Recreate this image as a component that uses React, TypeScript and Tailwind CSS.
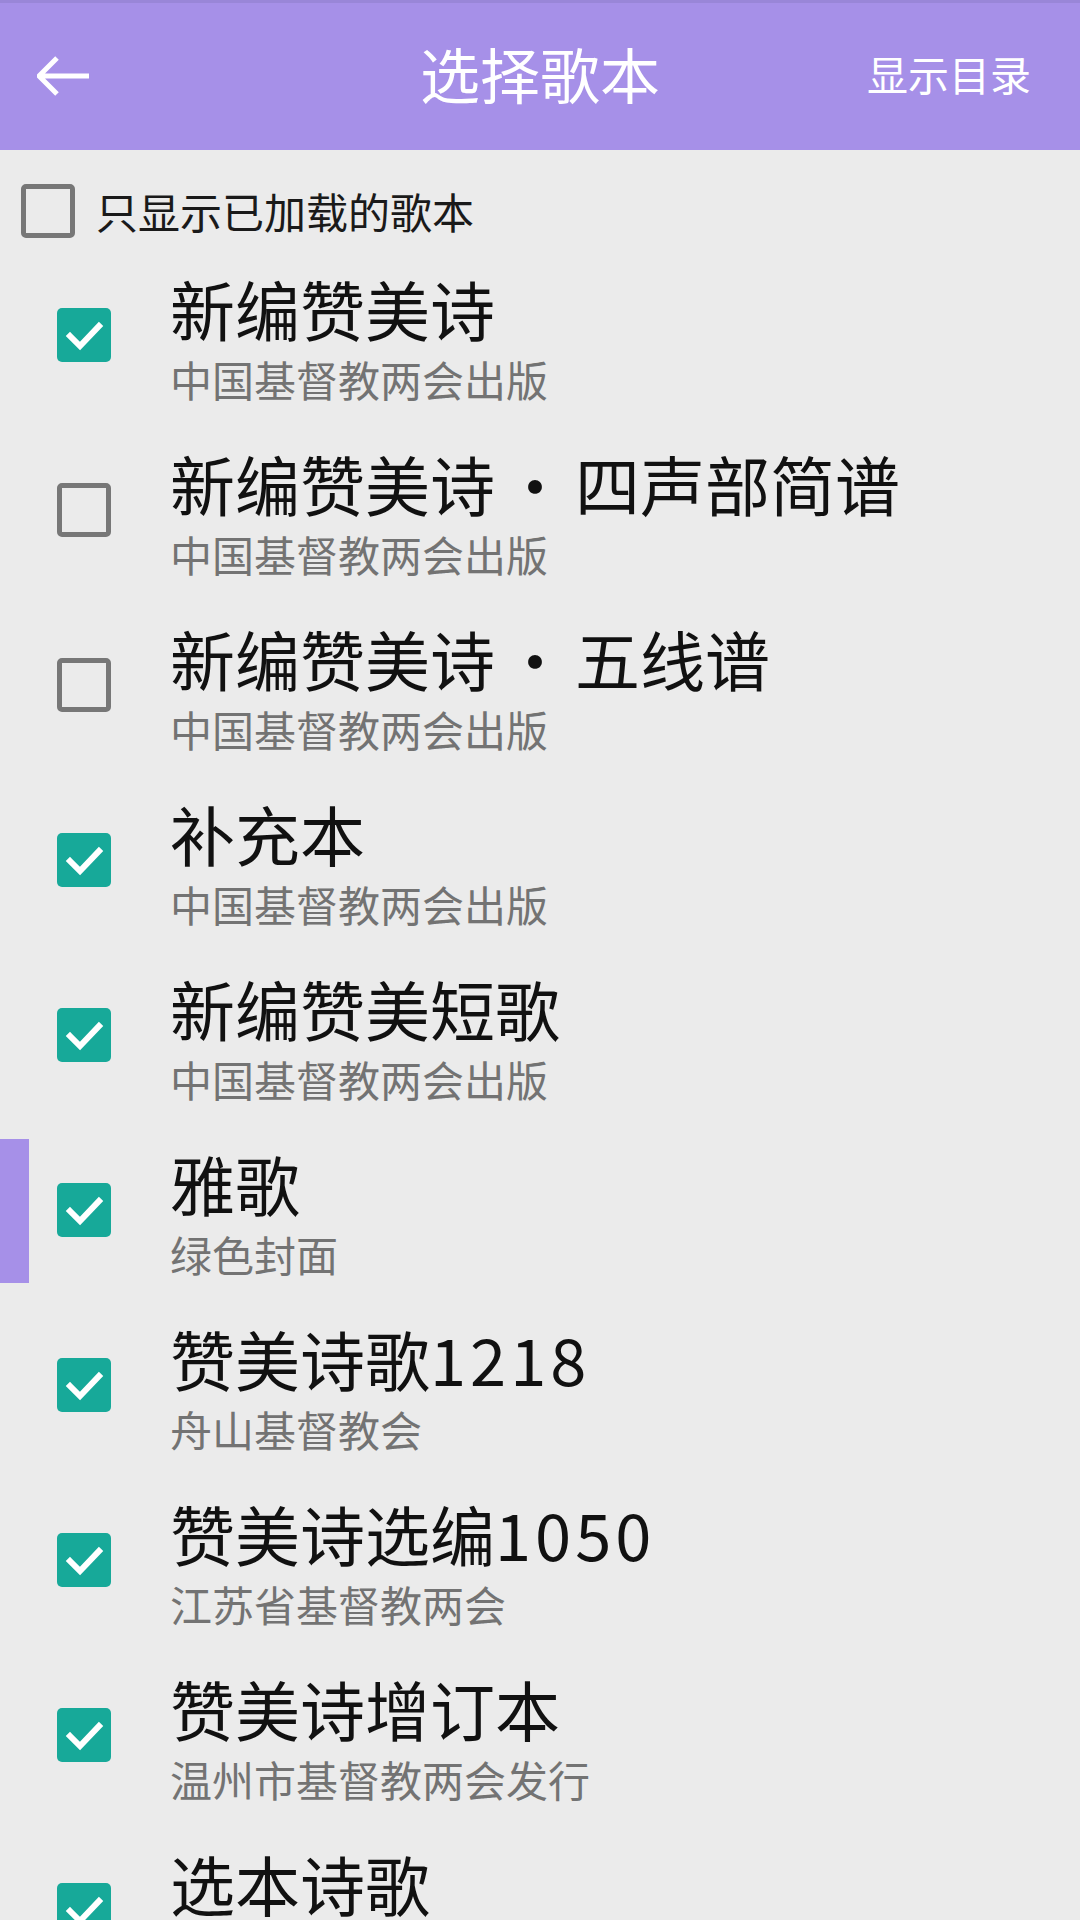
import React from 'react'

const font = { fontFamily: '"Noto Sans CJK SC", "Noto Sans", sans-serif' }

type Book = { name: string; extra?: string; num?: string; sub: string; on: boolean }

const books: Book[] = [
  { name: '新编赞美诗', sub: '中国基督教两会出版', on: true },
  { name: '新编赞美诗', extra: '四声部简谱', sub: '中国基督教两会出版', on: false },
  { name: '新编赞美诗', extra: '五线谱', sub: '中国基督教两会出版', on: false },
  { name: '补充本', sub: '中国基督教两会出版', on: true },
  { name: '新编赞美短歌', sub: '中国基督教两会出版', on: true },
  { name: '雅歌', sub: '绿色封面', on: true },
  { name: '赞美诗歌', num: '1218', sub: '舟山基督教会', on: true },
  { name: '赞美诗选编', num: '1050', sub: '江苏省基督教两会', on: true },
  { name: '赞美诗增订本', sub: '温州市基督教两会发行', on: true },
  { name: '选本诗歌', sub: '', on: true },
]

function Box({ on }: { on: boolean }) {
  if (on) {
    return (
      <div className="flex h-[54px] w-[54px] items-center justify-center rounded-[5px] bg-[#17a999]">
        <svg width="40" height="40" viewBox="0 0 40 40" fill="none">
          <path d="M6 21 L16 31 L35 11" stroke="white" strokeWidth="6" strokeLinecap="square" />
        </svg>
      </div>
    )
  }
  return <div className="h-[54px] w-[54px] rounded-[5px] border-[5px] border-[#777777]" />
}

export default function App() {
  return (
    <div className="relative h-[1920px] w-[1080px] overflow-hidden bg-[#ebebeb]" style={font}>
      <div className="relative flex h-[150px] items-center border-t-[3px] border-[#9986d8] bg-[#a690e8] px-[37px]">
        <svg width="54" height="40" viewBox="0 0 54 40" fill="none" className="mt-[-1px]">
          <path d="M2 20 H52 M20 2 L2 20 L20 38" stroke="white" strokeWidth="5" />
        </svg>
        <div className="absolute left-0 right-0 top-[30px] text-center text-[60px] leading-[80px] text-white">选择歌本</div>
        <div className="ml-auto mr-[12px] mt-[-6px] text-[41px] text-white">显示目录</div>
      </div>

      <div className="flex h-[97px] items-center gap-[21px] pl-[21px] pt-[24px]">
        <Box on={false} />
        <span className="text-[42px] leading-[54px] text-[#1a1a1a]">只显示已加载的歌本</span>
      </div>

      <div className="flex flex-col">
        {books.map((b) => (
          <div key={b.name + (b.extra ?? '')} className="flex h-[175px] shrink-0">
            <div className="flex w-[170px] items-center pl-[57px]">
              <Box on={b.on} />
            </div>
            <div className="flex flex-col pt-[23px]">
              <div className="flex whitespace-nowrap text-[65px] leading-[76px] text-[#111111]">
                <span>{b.name}</span>
                {b.extra && (
                  <>
                    <span className="w-[80px] text-center">·</span>
                    <span>{b.extra}</span>
                  </>
                )}
                {b.num && <span className="tracking-[4px]">{b.num}</span>}
              </div>
              <div className="mt-[8px] text-[42px] leading-[50px] text-[#737373]">{b.sub}</div>
            </div>
          </div>
        ))}
      </div>

      <div className="absolute left-0 top-[1139px] h-[144px] w-[29px] bg-[#a690e8]" />
    </div>
  )
}
